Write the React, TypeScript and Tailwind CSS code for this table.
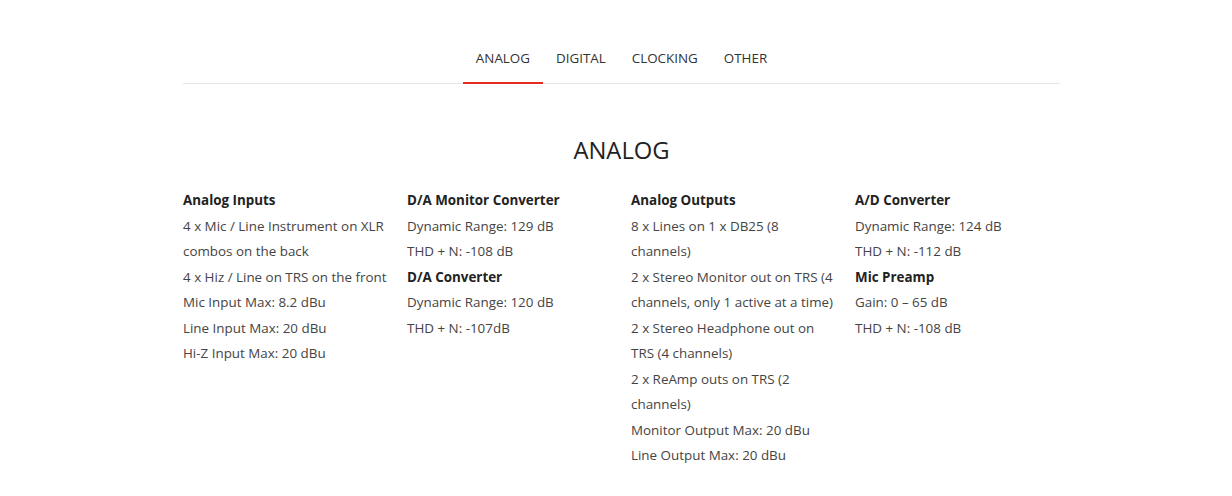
import { useState } from "react";

const tabs = ["ANALOG", "DIGITAL", "CLOCKING", "OTHER"];

type Block = { title: string; lines: string[] };

const columns: Block[][] = [
  [
    {
      title: "Analog Inputs",
      lines: [
        "4 x Mic / Line Instrument on XLR combos on the back",
        "4 x Hiz / Line on TRS on the front",
        "Mic Input Max: 8.2 dBu",
        "Line Input Max: 20 dBu",
        "Hi-Z Input Max: 20 dBu",
      ],
    },
  ],
  [
    { title: "D/A Monitor Converter", lines: ["Dynamic Range: 129 dB", "THD + N: -108 dB"] },
    { title: "D/A Converter", lines: ["Dynamic Range: 120 dB", "THD + N: -107dB"] },
  ],
  [
    {
      title: "Analog Outputs",
      lines: [
        "8 x Lines on 1 x DB25 (8 channels)",
        "2 x Stereo Monitor out on TRS (4 channels, only 1 active at a time)",
        "2 x Stereo Headphone out on TRS (4 channels)",
        "2 x ReAmp outs on TRS (2 channels)",
        "Monitor Output Max: 20 dBu",
        "Line Output Max: 20 dBu",
      ],
    },
  ],
  [
    { title: "A/D Converter", lines: ["Dynamic Range: 124 dB", "THD + N: -112 dB"] },
    { title: "Mic Preamp", lines: ["Gain: 0 – 65 dB", "THD + N: -108 dB"] },
  ],
];

export default function App() {
  const [active, setActive] = useState("ANALOG");

  return (
    <div
      className="min-h-screen bg-white pt-8"
      style={{ fontFamily: '"Open Sans", "Liberation Sans", sans-serif' }}
    >
      <div className="ml-[183px] w-[877px]">
        {/* Tabs */}
        <nav className="flex justify-center border-b border-[#e5e5e5]">
          {tabs.map((t) => (
            <button
              key={t}
              onClick={() => setActive(t)}
              className={
                active === t
                  ? "-mb-px border-b-2 border-[#e32b22] px-[13px] pt-[16px] pb-[14px] text-[13.4px] leading-5 text-[#333]"
                  : "-mb-px border-b-2 border-transparent px-[13px] pt-[16px] pb-[14px] text-[13.4px] leading-5 text-[#333]"
              }
            >
              {t}
            </button>
          ))}
        </nav>

        {/* Section title */}
        <h2 className="mt-[50px] text-center text-[23.8px] font-normal leading-8 text-[#222]">
          {active}
        </h2>

        {/* Spec columns */}
        <div className="mt-[22px] grid w-[880px] grid-cols-4 gap-x-4 text-[13.4px] leading-[25.5px] text-[#444]">
          {columns.map((col, i) => (
            <div key={i}>
              {col.map((b) => (
                <div key={b.title}>
                  <div className="font-bold text-[#222]">{b.title}</div>
                  {b.lines.map((l) => (
                    <div key={l}>{l}</div>
                  ))}
                </div>
              ))}
            </div>
          ))}
        </div>
      </div>
    </div>
  );
}
